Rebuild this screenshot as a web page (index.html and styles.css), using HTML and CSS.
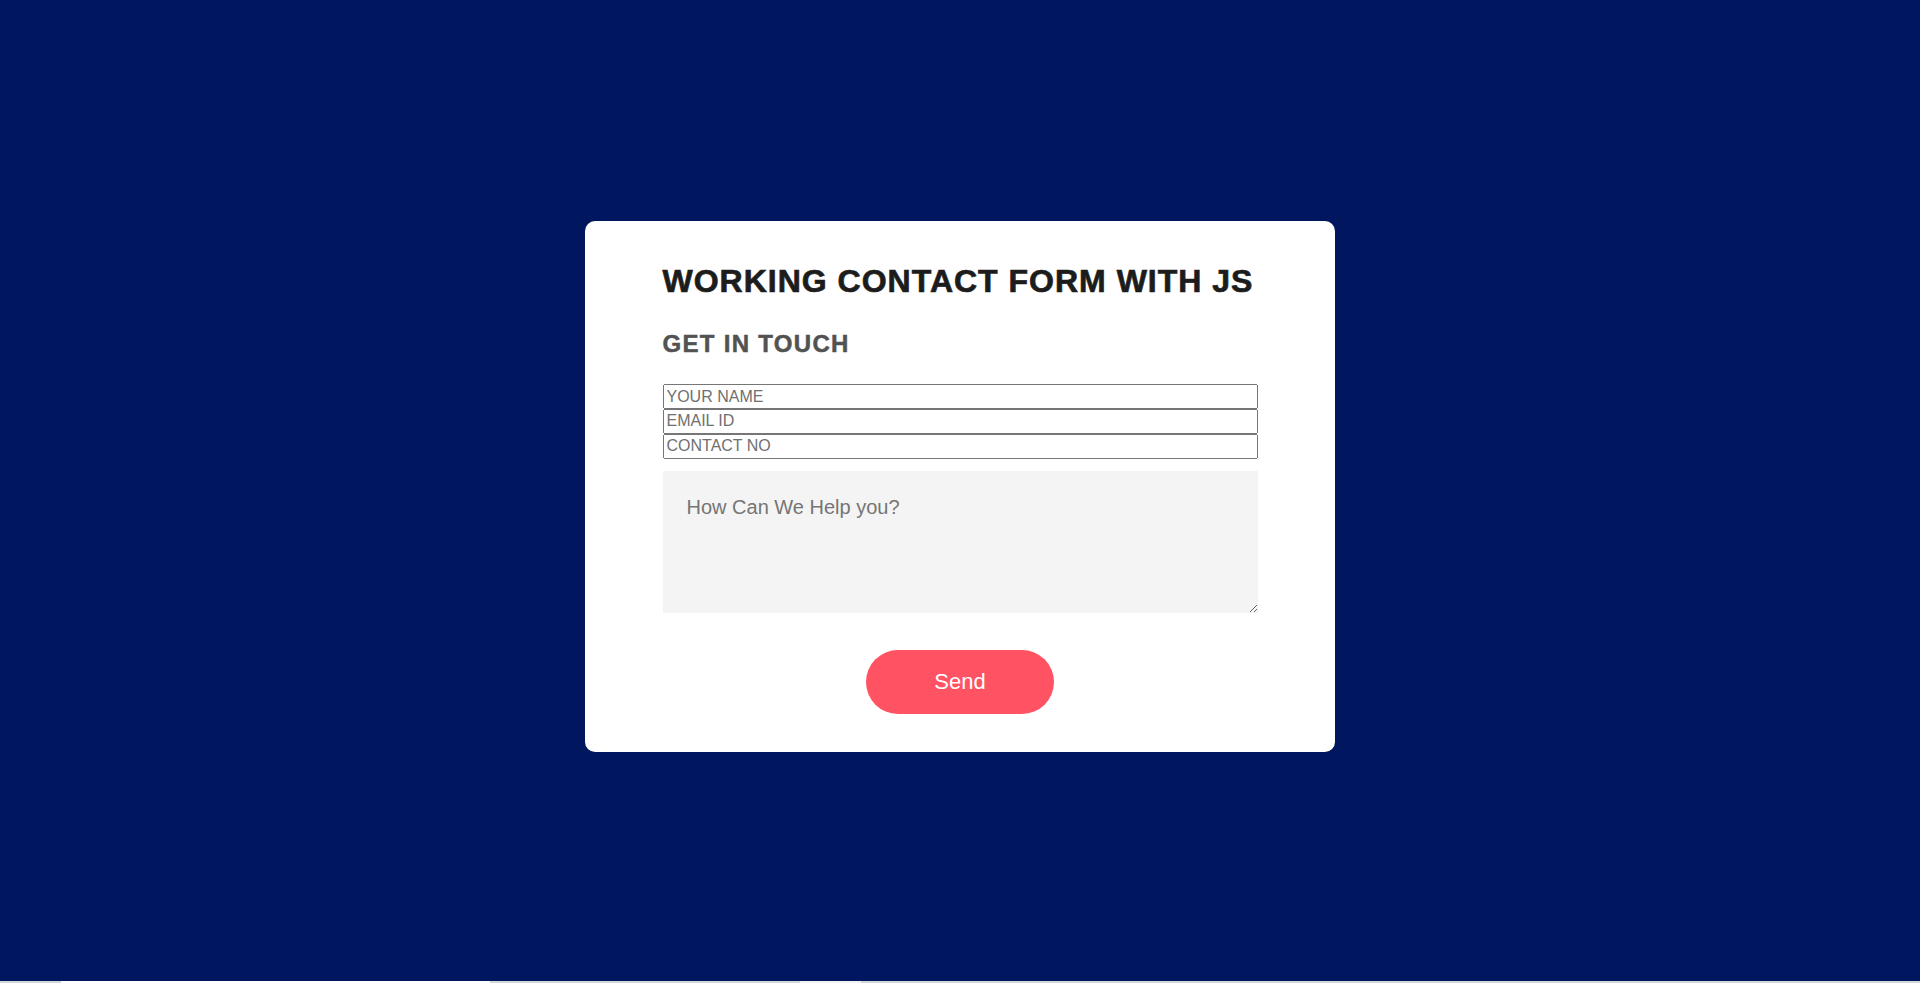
FILE: index.html
```html
<!DOCTYPE html>
<html lang="en">
<head>
<meta charset="utf-8">
<title>Working Contact Form With JS</title>
<link rel="stylesheet" href="styles.css">
</head>
<body>
<main class="page">
  <form class="card">
    <h1 class="title">WORKING CONTACT FORM WITH JS</h1>
    <h2 class="subtitle">GET IN TOUCH</h2>
    <div class="fields">
      <input class="field" type="text" placeholder="YOUR NAME">
      <input class="field" type="email" placeholder="EMAIL ID">
      <input class="field" type="text" placeholder="CONTACT NO">
    </div>
    <textarea class="message" placeholder="How Can We Help you?"></textarea>
    <div class="actions">
      <button class="send" type="button">Send</button>
    </div>
  </form>
</main>
<div class="scrollstrip"></div>
</body>
</html>
```
FILE: styles.css
```css
html, body {
  margin: 0;
  padding: 0;
}
body {
  background: #00165e;
  font-family: "Liberation Sans", Arial, sans-serif;
  overflow: hidden;
}
.page {
  height: 981px;
  box-sizing: border-box;
  padding-bottom: 8px;
  display: flex;
  align-items: center;
  justify-content: center;
}
.scrollstrip {
  height: 2px;
  background: linear-gradient(to right,
    #d4d6dc 0, #d4d6dc 61px,
    #ffffff 61px, #ffffff 490px,
    #d4d6dc 490px, #d4d6dc 800px,
    #f2f2f4 800px, #f2f2f4 861px,
    #d4d6dc 861px, #d4d6dc 100%);
}
.card {
  width: 750px;
  box-sizing: border-box;
  background: #ffffff;
  border-radius: 10px;
  padding: 42px 77.5px 38px;
  display: flex;
  flex-direction: column;
}
.title {
  margin: 0;
  font-size: 32px;
  font-weight: bold;
  letter-spacing: 1px;
  color: #1c1c1c;
  line-height: normal;
  -webkit-text-stroke: 0.7px #1c1c1c;
}
.subtitle {
  margin: 30px 0 26.5px;
  font-size: 24px;
  font-weight: bold;
  letter-spacing: 1.3px;
  color: #525252;
  line-height: normal;
  -webkit-text-stroke: 0.5px #525252;
}
.fields {
  display: flex;
  flex-direction: column;
}
.field {
  display: block;
  width: 100%;
  height: 24.8px;
  box-sizing: border-box;
  margin: 0;
  font-family: "Liberation Sans", Arial, sans-serif;
  font-size: 16px;
  color: #333;
}
.field::placeholder {
  color: #707070;
}
.message {
  display: block;
  width: 100%;
  height: 142px;
  box-sizing: border-box;
  margin: 12.5px 0 0;
  border: none;
  outline: none;
  background: #f4f4f4;
  padding: 25px 24px 24px;
  font-family: "Liberation Sans", Arial, sans-serif;
  font-size: 20px;
  color: #333;
}
.message::placeholder {
  color: #757575;
}
.actions {
  display: flex;
  justify-content: center;
  margin-top: 37px;
}
.send {
  width: 188px;
  height: 64px;
  border: none;
  border-radius: 32px;
  background: #ff5263;
  color: #ffffff;
  font-family: "Liberation Sans", Arial, sans-serif;
  font-size: 22px;
  cursor: pointer;
}
```
